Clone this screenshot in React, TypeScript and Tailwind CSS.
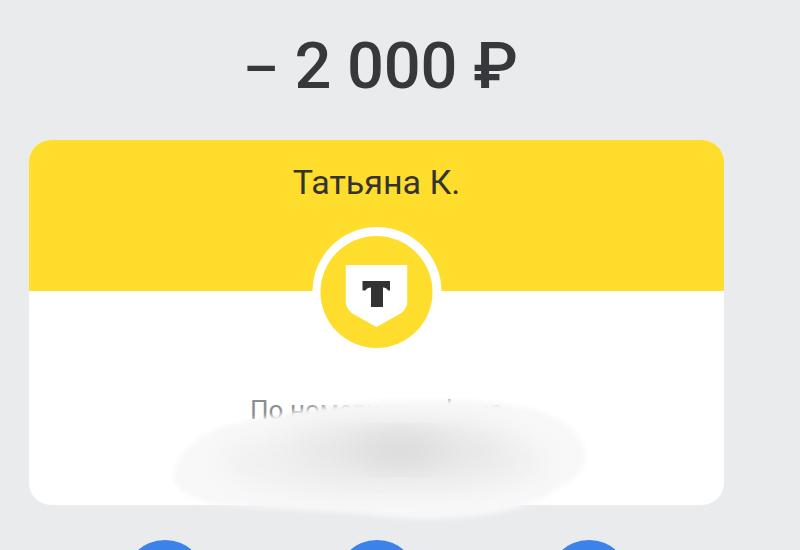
const font = { fontFamily: "Roboto, sans-serif" };

function Logo() {
  return (
    <div className="absolute left-1/2 top-[87px] -translate-x-1/2 w-[129px] h-[129px] rounded-full bg-white flex items-center justify-center">
      <div className="w-[112px] h-[112px] rounded-full bg-[#ffdd2d] flex items-center justify-center">
        <svg className="mt-2" width="62" height="62" viewBox="0 0 62 62">
          <path d="M0 0H62V35C62 41 59 45 56 48L31 62L6 48C3 45 0 41 0 35Z" fill="#fff" />
          <path
            d="M17 16H44.5V25.5H42.5C41.5 23.5 40 22.5 37.5 22.5V42H25.5V22.5C23 22.5 21 23.5 20 25.5H17Z"
            fill="#333"
          />
        </svg>
      </div>
    </div>
  );
}

function Smudge() {
  return (
    <svg className="absolute left-0 top-0" width="800" height="550" viewBox="0 0 800 550">
      <defs>
        <filter id="soft" x="-20%" y="-20%" width="140%" height="140%">
          <feGaussianBlur stdDeviation="2.5" />
        </filter>
        <filter id="mid" x="-20%" y="-40%" width="140%" height="180%">
          <feGaussianBlur stdDeviation="12" />
        </filter>
        <filter id="softer" x="-40%" y="-60%" width="180%" height="220%">
          <feGaussianBlur stdDeviation="18" />
        </filter>
      </defs>
      <path
        d="M175 468C185 445 205 430 235 424C275 415 320 405 370 402C400 400 430 400 460 400C510 402 540 410 560 420C588 438 594 462 574 478C550 497 520 510 490 514C450 520 410 520 380 516C340 510 270 510 210 503C190 498 170 490 175 468Z"
        fill="#f8f8f9"
        filter="url(#soft)"
      />
      <ellipse cx="385" cy="462" rx="165" ry="36" fill="#f1f1f2" filter="url(#mid)" />
      <ellipse cx="400" cy="450" rx="110" ry="20" fill="#e2e2e3" filter="url(#softer)" />
      <ellipse cx="400" cy="450" rx="40" ry="12" fill="#d4d4d5" filter="url(#softer)" />
    </svg>
  );
}

export default function App() {
  const actions = ["pay", "repeat", "more"];

  return (
    <div className="relative w-[800px] h-[550px] overflow-hidden bg-[#e9ebed]" style={font}>
      <div className="w-[695px] ml-[29px]">
        <div className="h-[140px] pt-[27px] flex justify-center">
          <h1 className="pl-[8px] text-[65px] leading-[78px] font-medium tracking-[-0.2px] text-[#36383b] whitespace-nowrap">
            <span className="text-[55px]">–</span> 2 000 ₽
          </h1>
        </div>

        <div className="relative h-[365px] rounded-[22px] bg-white">
          <div className="h-[151px] rounded-t-[22px] bg-[#ffdd2d] pt-[22px] text-center text-[34px] leading-[40px] text-[#333333]">
            Татьяна К.
          </div>
          <Logo />
          <p className="pt-[103px] text-center text-[26px] leading-[33px] text-[#8c8e91] whitespace-nowrap">
            По номеру телефона
          </p>
        </div>

        <div className="mt-[35px] flex justify-center gap-[130px]">
          {actions.map((a) => (
            <div key={a} className="w-[82px] h-[82px] shrink-0 rounded-full bg-[#3b82ea]" />
          ))}
        </div>
      </div>
      <Smudge />
    </div>
  );
}
